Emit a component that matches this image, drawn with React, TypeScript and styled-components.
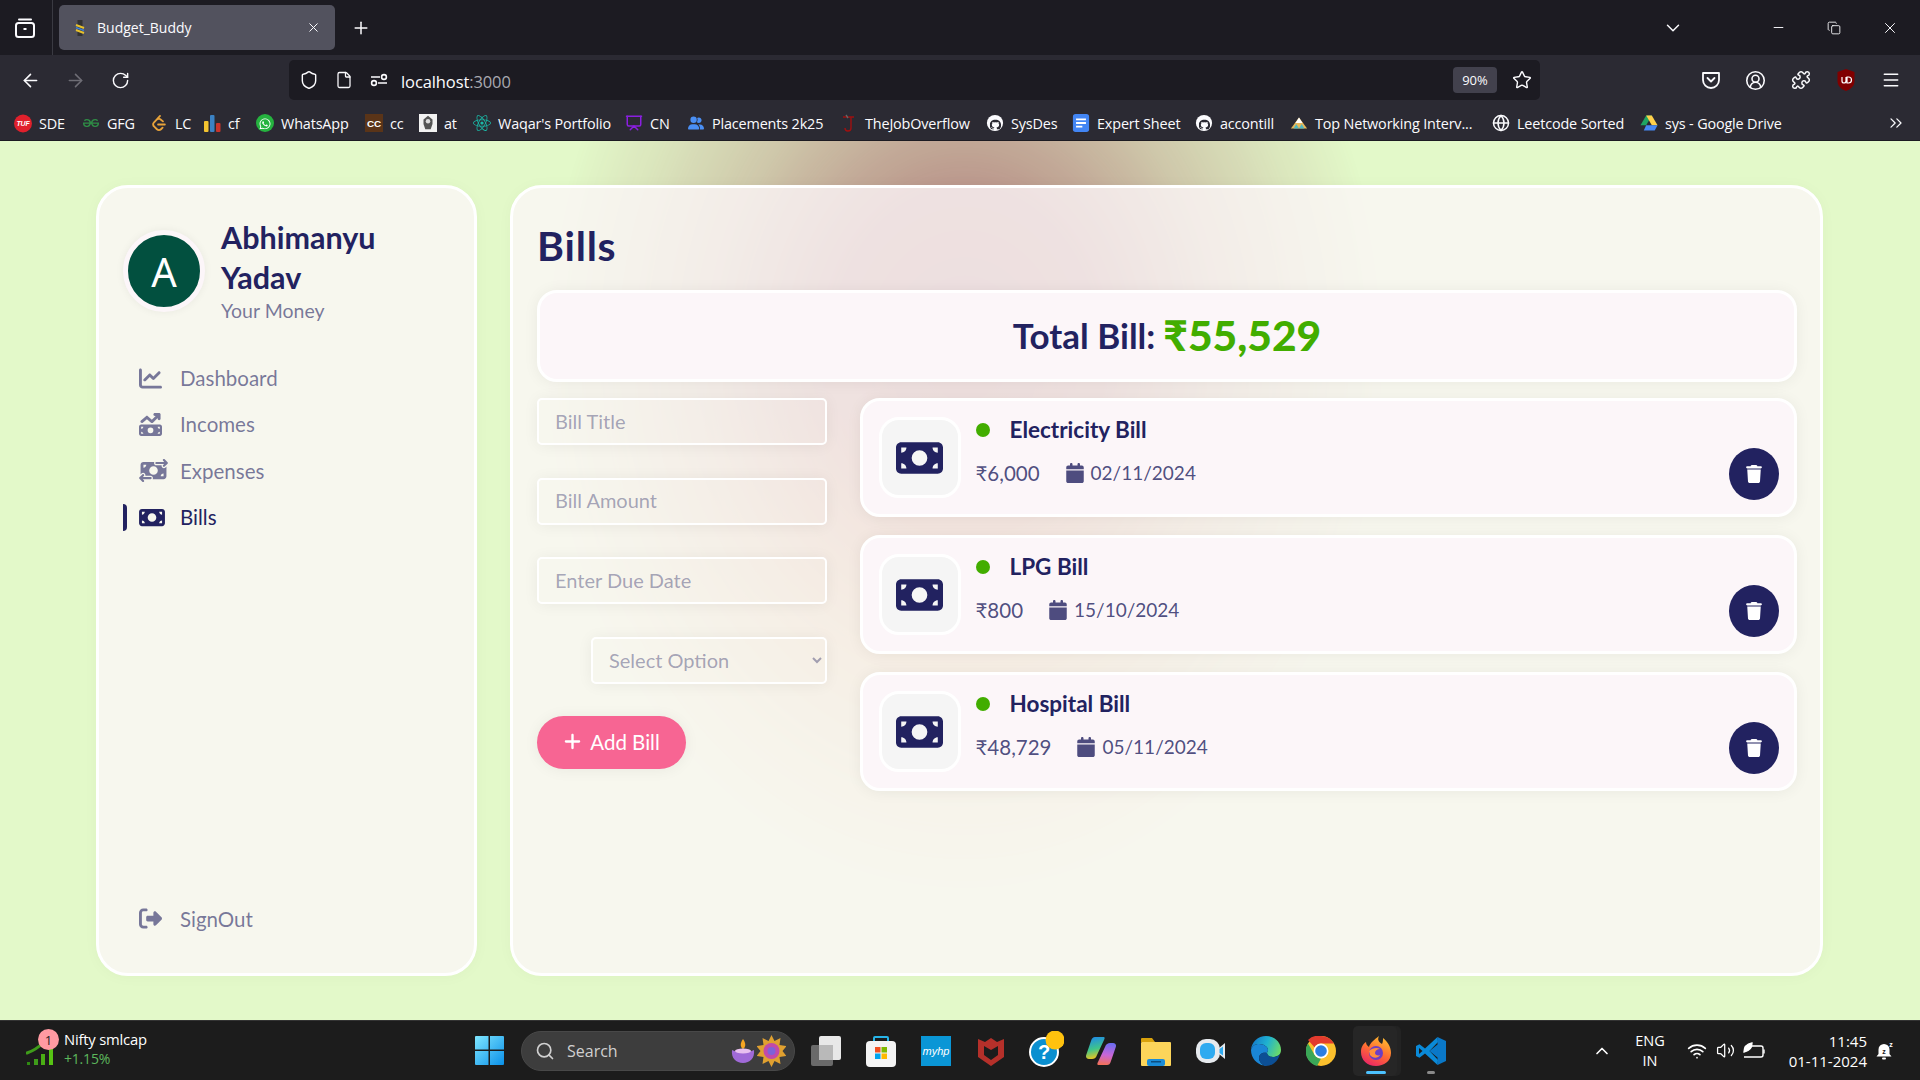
import React from "react";
import styled, { createGlobalStyle } from "styled-components";
import {
  ArrowLeft, ArrowRight, RotateCw, Shield, File, Star, CircleUserRound, Puzzle, Menu, X, Plus,
  ChevronDown, Minus, ChevronsRight, Globe, ChevronUp, Search, Wifi, Volume2, Presentation, Copy,
} from "lucide-react";
import {
  FaMoneyBill, FaMoneyBillTrendUp, FaMoneyBillTransfer, FaChartLine, FaCalendar, FaTrash, FaPlus,
  FaRightFromBracket, FaWhatsapp, FaGithub, FaReact, FaUserGroup,
} from "react-icons/fa6";
import { SiGeeksforgeeks, SiLeetcode } from "react-icons/si";

const Global = createGlobalStyle`
  html, body { margin: 0; padding: 0; width: 1920px; height: 1080px; overflow: hidden; }
  body { font-family: "Open Sans", sans-serif; }
  * { box-sizing: border-box; }
`;

const Screen = styled.div`
  width: 1920px; height: 1080px; display: flex; flex-direction: column; background: #e3f9c9;
`;

/* ---------- browser chrome ---------- */
const TabBar = styled.div`
  height: 55px; background: #1c1b22; display: flex; align-items: center; color: #fbfbfe; flex: none;
`;
const TabListButton = styled.div`
  width: 53px; height: 55px; display: flex; align-items: center; justify-content: center;
  border-right: 1px solid #3a3a42; flex: none; padding-right: 3px;
`;
const Tab = styled.div`
  margin-left: 6px; width: 276px; height: 45px; background: #52525e; border-radius: 5px;
  display: flex; align-items: center; padding: 0 14px 0 14px; font-size: 14px; color: #fbfbfe;
`;
const TabTitle = styled.span` margin-left: 10px; flex: 1; `;
const NewTab = styled.div` width: 52px; display: flex; justify-content: center; `;
const WindowControls = styled.div` margin-left: auto; display: flex; align-items: center; padding-right: 2px; `;
const ListTabs = styled.div` width: 44px; margin-right: 55px; display: flex; justify-content: center; `;
const WinButton = styled.div` width: 56px; display: flex; justify-content: center; `;

const Toolbar = styled.div`
  height: 45px; background: #2b2a33; display: flex; align-items: flex-end; flex: none; padding-left: 8px; color: #fbfbfe;
`;
const ToolButton = styled.div<{ $dim?: boolean }>`
  width: 45px; height: 40px; display: flex; align-items: center; justify-content: center; flex: none;
  color: ${(p) => (p.$dim ? "#6e6d75" : "#fbfbfe")};
`;
const AddressBar = styled.div`
  margin-left: 146px; width: 1251px; height: 40px; background: #1c1b22; border-radius: 5px;
  display: flex; align-items: center; padding-left: 2px; flex: none;
`;
const AddressIcon = styled.div` width: 35px; display: flex; justify-content: center; flex: none; `;
const Url = styled.div` margin-left: 5px; padding-top: 2px; font-size: 16.5px; color: #fbfbfe; flex: 1; letter-spacing: -0.1px; `;
const UrlPort = styled.span` color: #a9a9b0; `;
const ZoomPill = styled.div`
  width: 44px; height: 26px; background: #42414d; border-radius: 4px; font-size: 13px; color: #fbfbfe;
  display: flex; align-items: center; justify-content: center; flex: none;
`;
const StarSlot = styled.div` width: 43px; padding-left: 7px; display: flex; justify-content: center; flex: none; `;
const ToolRight = styled.div` margin-left: 148px; display: flex; `;

const Bookmarks = styled.div`
  height: 41px; background: #2b2a33; display: flex; align-items: center; padding: 6px 0 0 14px; flex: none;
  border-bottom: 1px solid #1c1b22; position: relative;
`;
const Bookmark = styled.div<{ $w: number }>`
  width: ${(p) => p.$w}px; display: flex; align-items: center; font-size: 14.4px; color: #fbfbfe; flex: none;
  white-space: nowrap; gap: 7px; letter-spacing: -0.15px;
`;
const BookmarkIcon = styled.span`
  width: 18px; height: 18px; display: flex; align-items: center; justify-content: center; flex: none;
`;
const MoreBookmarks = styled.div` margin-left: auto; margin-right: 14px; display: flex; color: #fbfbfe; `;

/* ---------- page ---------- */
const Stage = styled.div`
  flex: 1; position: relative; overflow: hidden; background: #e3f9c9; display: flex; gap: 33px;
  padding: 44px 97px 44px 96px; font-family: Lato, "Noto Sans", sans-serif; color: #222260;
`;
const Orb = styled.div`
  position: absolute; left: 525px; top: -341px; width: 880px; height: 1120px;
  background: linear-gradient(180deg, rgb(180,135,130) 49%, rgb(215,160,105) 76%);
  mask-image: radial-gradient(closest-side, rgba(0,0,0,1) 0%, rgba(0,0,0,.85) 31%, rgba(0,0,0,.42) 58%, rgba(0,0,0,.18) 78%, rgba(0,0,0,0) 96%);
`;
const Panel = styled.div`
  position: relative; background: rgba(252, 246, 249, 0.78); border: 3px solid #fff; border-radius: 32px;
  box-shadow: 0 1px 15px rgba(0, 0, 0, 0.03);
`;
const Sidebar = styled(Panel)`
  width: 381px; display: flex; flex-direction: column; padding: 29px 23px 31px 24px;
`;
const Profile = styled.div` display: flex; align-items: center; gap: 16px; `;
const Avatar = styled.div`
  width: 82px; height: 82px; border-radius: 50%; background: #02503f; border: 5px solid #fcf6f9;
  box-shadow: 0 0 8px rgba(0,0,0,.06); color: #fff; font-size: 40px; display: flex; align-items: center;
  justify-content: center; flex: none; font-family: "Noto Sans", sans-serif;
`;
const ProfileText = styled.div` display: flex; flex-direction: column; `;
const ProfileName = styled.div` font-size: 30.5px; line-height: 40px; font-weight: 700; `;
const ProfileSub = styled.div` font-size: 19.5px; line-height: 28px; color: rgba(34,34,96,.6); `;
const Nav = styled.nav` margin-top: 30px; display: flex; flex-direction: column; `;
const NavRow = styled.div<{ $active?: boolean }>`
  position: relative; height: 46.3px; display: flex; align-items: center; padding-left: 16px;
  font-size: 20.5px; color: ${(p) => (p.$active ? "#222260" : "rgba(34,34,96,.6)")};
  &::before {
    content: ""; display: ${(p) => (p.$active ? "block" : "none")}; position: absolute; left: 0; top: 10px;
    width: 4px; height: 27px; background: #222260; border-radius: 0 4px 4px 0;
  }
`;
const NavIcon = styled.span<{ $w: number }>`
  width: 41px; display: flex; align-items: center; flex: none;
  svg { height: 23px; width: ${(p) => p.$w}px; }
`;
const SignOutRow = styled(NavRow)` margin-top: auto; `;

const Main = styled(Panel)` width: 1313px; padding: 33px 23px 0 24px; `;
const Heading = styled.h1` margin: 0; font-size: 41px; line-height: 50px; font-weight: 700; letter-spacing: 0.8px; `;
const TotalCard = styled.div`
  margin-top: 19px; height: 92px; background: #fcf6f9; border: 3px solid #fff; border-radius: 20px; padding-bottom: 3px;
  box-shadow: 0 1px 15px rgba(0,0,0,.06); display: flex; align-items: center; justify-content: center; gap: 8px;
  font-size: 35px; font-weight: 700;
`;
const TotalAmount = styled.span` color: #42ad00; font-size: 42.5px; font-weight: 900; `;
const Columns = styled.div` margin-top: 16px; display: flex; gap: 33px; align-items: flex-start; `;
const Form = styled.form` width: 290px; flex: none; display: flex; flex-direction: column; gap: 32.5px; `;
const Field = styled.input`
  width: 100%; height: 47px; border: 2px solid #fff; border-radius: 5px; background: transparent; outline: none;
  padding: 0 16px 2px; font: 400 20px Lato, sans-serif; color: #222260;
  box-shadow: 0 1px 15px rgba(0,0,0,.06);
  &::placeholder { color: rgba(34,34,96,.4); opacity: 1; }
`;
const Select = styled.select`
  width: 236px; height: 47px; align-self: flex-end; border: 2px solid #fff; border-radius: 5px; background: transparent;
  outline: none; padding: 0 12px; font: 400 20px Lato, sans-serif; color: rgba(34,34,96,.4);
  box-shadow: 0 1px 15px rgba(0,0,0,.06);
`;
const AddButton = styled.button`
  align-self: flex-start; width: 149px; height: 53px; border: 0; border-radius: 30px; background: #f76593; color: #fff;
  display: flex; align-items: center; justify-content: center; gap: 8px; font: 400 20.5px Lato, sans-serif; padding: 0 0 2px;
  box-shadow: 0 1px 15px rgba(0,0,0,.06);
`;
const BillList = styled.div` flex: 1; display: flex; flex-direction: column; gap: 18px; `;
const BillCard = styled.div`
  height: 119px; background: #fcf6f9; border: 3px solid #fff; border-radius: 20px; display: flex; align-items: center;
  padding: 0 15px 0 15.5px; gap: 15px; box-shadow: 0 1px 15px rgba(0,0,0,.06);
`;
const BillIcon = styled.div`
  width: 82px; height: 81px; border-radius: 20px; background: #f5f5f5; border: 3px solid #fff; flex: none;
  display: flex; align-items: center; justify-content: center; color: #222260;
  svg { height: 42px; width: 47px; }
`;
const BillBody = styled.div` flex: 1; display: flex; flex-direction: column; gap: 4px; `;
const BillTitleRow = styled.div` height: 28px; display: flex; align-items: center; gap: 20px; font-size: 22.5px; font-weight: 700; `;
const Dot = styled.span` width: 14px; height: 14px; border-radius: 50%; background: #42ad00; flex: none; `;
const BillMeta = styled.div` height: 52px; display: flex; align-items: center; font-size: 20.5px; color: rgba(34,34,96,.8); `;
const Amount = styled.span` padding-bottom: 2px; `;
const DateText = styled.span` margin-left: 25px; display: flex; align-items: center; gap: 6px; font-size: 19px; padding-bottom: 2px; `;
const DeleteButton = styled.button`
  margin-left: auto; width: 50px; height: 52px; border: 0; border-radius: 50%; background: #222260; color: #fff;
  display: flex; align-items: center; justify-content: center; font-size: 18px; padding: 0;
`;

/* ---------- task bar ---------- */
const TaskBar = styled.div`
  height: 60px; background: #1c1c1c; border-top: 1px solid #333; flex: none; display: flex; align-items: center;
  color: #fff; font-family: "Open Sans", sans-serif; position: relative;
`;
const Widget = styled.div` width: 475px; display: flex; align-items: center; padding-left: 26px; flex: none; position: relative; `;
const WidgetBadge = styled.span`
  position: absolute; left: 38px; top: -3px; width: 21px; height: 21px; border-radius: 50%; background: #ff9aa2; color: #222;
  font-size: 13px; display: flex; align-items: center; justify-content: center;
`;
const WidgetText = styled.div` margin: -3px 0 0 10px; display: flex; flex-direction: column; font-size: 14.8px; line-height: 20px; letter-spacing: -0.2px; `;
const WidgetDelta = styled.span` color: #5cb85c; font-size: 14px; `;
const SearchBox = styled.div`
  margin-left: 17px; width: 274px; height: 40px; border-radius: 20px; background: #3d3d3d; border: 1px solid #484848; display: flex; align-items: center;
  padding: 0 8px 0 13px; color: #d0d0d0; font-size: 16px; flex: none;
`;
const SearchLabel = styled.span` margin-left: 12px; flex: 1; `;
const Apps = styled.div` margin-left: 3px; display: flex; flex: none; `;
const AppSlot = styled.div<{ $active?: boolean }>`
  width: 55px; height: 50px; display: flex; align-items: center; justify-content: center; position: relative;
  &::before {
    content: ""; display: ${(p) => (p.$active ? "block" : "none")}; position: absolute; left: 5px; top: 0; width: 44px; height: 50px;
    background: #262626; border-radius: 5px; box-shadow: 4px 0 0 #232323;
  }
  svg { position: relative; }
`;
const AppMark = styled.span<{ $c: string; $w: number }>`
  position: absolute; bottom: 2px; left: 50%; transform: translateX(-50%); height: 3px; border-radius: 2px;
  width: ${(p) => p.$w}px; background: ${(p) => p.$c};
`;
const Tray = styled.div` margin-left: auto; margin-right: 17px; display: flex; align-items: center; flex: none; `;
const TrayIcon = styled.div<{ $w: number }>` width: ${(p) => p.$w}px; display: flex; justify-content: center; flex: none; `;
const Lang = styled.div` width: 52px; text-align: center; font-size: 14.5px; line-height: 20px; margin: 0 7px; `;
const Clock = styled.div` width: 98px; text-align: right; font-size: 15px; line-height: 20px; `;

/* ---------- drawings ---------- */
const TabListIcon = () => (
  <svg width="22" height="22" viewBox="0 0 22 22" fill="none" stroke="#fbfbfe" strokeWidth="2">
    <rect x="2" y="6" width="18" height="14" rx="2.5" /><path d="M5 2.5h12" strokeLinecap="round" /><rect x="9.5" y="11" width="3" height="2" fill="#fbfbfe" stroke="none" />
  </svg>
);
const Favicon = () => (
  <svg width="14" height="18" viewBox="0 0 14 18"><path d="M7 1v16" stroke="#333" strokeWidth="5" /><path d="M3 6l8 3M3 11l8 3" stroke="#e6c02c" strokeWidth="2" /><path d="M3 8.5l8 3" stroke="#3b7dd8" strokeWidth="1.5" /></svg>
);
const PermsIcon = () => (
  <svg width="18" height="14" viewBox="0 0 18 14" fill="none" stroke="#fbfbfe" strokeWidth="1.6"><path d="M1 4h9M8 10h9" /><circle cx="14" cy="4" r="2.4" /><circle cx="4" cy="10" r="2.4" /></svg>
);
const PocketIcon = () => (
  <svg width="20" height="20" viewBox="0 0 20 20" fill="none" stroke="#fbfbfe" strokeWidth="1.8" strokeLinejoin="round"><path d="M2 3h16v7a8 8 0 0 1-16 0z" /><path d="M6.5 8L10 11.5 13.5 8" strokeLinecap="round" /></svg>
);
const UBlockIcon = () => (
  <svg width="20" height="24" viewBox="0 0 20 24"><path d="M10 1l8.5 3v9c0 5-4 8.5-8.500 10C5.500 21.500 1.500 18 1.500 13V4z" fill="#800000" /><path d="M6 9v4a2 2 0 0 0 4 0V9M11 9v6h1.500a3 3 0 0 0 0-6z" fill="none" stroke="#fff" strokeWidth="1.2" /></svg>
);
const TufIcon = () => (
  <svg width="19" height="19" viewBox="0 0 18 18"><circle cx="9" cy="9" r="9" fill="#e0202c" /><text x="9" y="11.500" textAnchor="middle" fontSize="7" fontWeight="700" fontStyle="italic" fill="#fff" fontFamily="Liberation Sans">TUF</text></svg>
);
const CfIcon = () => (
  <svg width="17" height="18" viewBox="0 0 17 18"><rect x="0" y="7" width="4.500" height="11" rx="1" fill="#f4c430" /><rect x="6" y="1" width="4.500" height="17" rx="1" fill="#3b82c4" /><rect x="12" y="9" width="4.500" height="9" rx="1" fill="#c8342c" /></svg>
);
const WhatsAppIcon = () => (
  <svg width="20" height="20" viewBox="0 0 20 20"><circle cx="10" cy="10" r="10" fill="#25b33f" /><foreignObject x="3" y="3" width="14" height="14"><FaWhatsapp size={14} color="#fff" /></foreignObject></svg>
);
const CcIcon = () => (
  <svg width="20" height="20" viewBox="0 0 20 20"><rect width="20" height="20" fill="#5a3418" /><text x="10" y="14" textAnchor="middle" fontSize="11" fontWeight="700" fill="#fff" fontFamily="Liberation Sans">CC</text></svg>
);
const AtIcon = () => (
  <svg width="20" height="20" viewBox="0 0 20 20"><rect width="20" height="20" fill="#f2f2f2" /><path d="M10 2l5 4v5l-2 6H7l-2-6V6z" fill="#555" /><circle cx="10" cy="8" r="2.500" fill="#ddd" /></svg>
);
const JobIcon = () => (
  <svg width="18" height="18" viewBox="0 0 18 18" fill="none" stroke="#a01010" strokeWidth="1.400"><path d="M3 3h11M11 3v11a3 3 0 0 1-6 0" /><path d="M6 1l2 3" stroke="#666" /></svg>
);
const SheetIcon = () => (
  <svg width="20" height="20" viewBox="0 0 20 20"><rect x="1" width="18" height="20" rx="3" fill="#4285f4" /><path d="M4.500 6h11M4.500 10h11M4.500 14h7" stroke="#fff" strokeWidth="2" /></svg>
);
const RepoIcon = () => (
  <svg width="20" height="20" viewBox="0 0 20 20"><circle cx="10" cy="10" r="9" fill="#fbfbfe" /><foreignObject x="3.500" y="3.500" width="13" height="13"><FaGithub size={13} color="#2b2a33" /></foreignObject></svg>
);
const PeakIcon = () => (
  <svg width="20" height="16" viewBox="0 0 20 16"><path d="M10 2l9 12H1z" fill="#e6b85c" /><path d="M10 2l4 6H6z" fill="#fff" /><path d="M4 14l3-5 3 5 3-5 3 5z" fill="#4fb8c4" /></svg>
);
const DriveIcon = () => (
  <svg width="19" height="18" viewBox="0 0 19 18"><path d="M6.500 1h6l-6 10.500H.500z" fill="#1fa463" /><path d="M12.500 1l6 10.500h-6L6.500 1z" fill="#ffd04b" /><path d="M4 17l2.500-5.500h12L15.500 17z" fill="#4688f4" /></svg>
);
const ChartSmall = () => (
  <svg width="28" height="30" viewBox="0 0 28 30"><path d="M1 17Q10 14 18 6" fill="none" stroke="#3f9c1a" strokeWidth="3" strokeLinecap="round" /><rect x="1" y="26" width="3" height="3" fill="#2f8a12" /><rect x="8" y="23" width="4" height="6" fill="#3f9c1a" /><rect x="15" y="18" width="4" height="11" fill="#4aae14" /><rect x="23" y="12" width="4" height="17" fill="#57c414" /></svg>
);
const StartIcon = () => (
  <svg width="29" height="29" viewBox="0 0 29 29"><defs><linearGradient id="st" x1="0" y1="0" x2="1" y2="1"><stop offset="0" stopColor="#7fe6ff" /><stop offset="1" stopColor="#0a90e8" /></linearGradient></defs><path d="M0 1a1 1 0 0 1 1-1h12.500v13.500H0zM15 0h13a1 1 0 0 1 1 1v12.500H15zM0 15h13.500v14H1a1 1 0 0 1-1-1zM15 15h14v13a1 1 0 0 1-1 1H15z" fill="url(#st)" /></svg>
);
const DiyaIcon = () => (
  <svg width="26" height="28" viewBox="0 0 26 28"><path d="M12 2c3 4 3 8 0 10-3-2-3-6 0-10z" fill="#f6a623" /><path d="M1 13c6 3 16 3 22 0 1 8-4 13-11 13S0 21 1 13z" fill="#a06ad8" /><ellipse cx="12" cy="14" rx="8" ry="2.500" fill="#e8c0f0" /></svg>
);
const StarburstIcon = () => (
  <svg width="29" height="32" viewBox="0 0 29 32"><path d="M14.500 0l3 6 6-3-1 7 7 1-4 5 4 5-7 1 1 7-6-3-3 6-3-6-6 3 1-7-7-1 4-5-4-5 7-1-1-7 6 3z" fill="#e0a030" /><circle cx="14.500" cy="16" r="8" fill="#c24aa8" /><circle cx="14.500" cy="16" r="4" fill="#7d62d8" /></svg>
);
const TaskViewIcon = () => (
  <svg width="30" height="30" viewBox="0 0 30 30"><rect x="8" y="0" width="22" height="24" rx="2" fill="#e8e8e8" /><rect x="0" y="9" width="22" height="21" rx="2" fill="#6a6a6a" /><rect x="8" y="9" width="14" height="15" fill="#b9b9b9" /></svg>
);
const StoreIcon = () => (
  <svg width="30" height="32" viewBox="0 0 30 32"><path d="M8 7V3a1 1 0 0 1 1-1h12a1 1 0 0 1 1 1v4" fill="none" stroke="#27b4e8" strokeWidth="2" /><rect y="6" width="30" height="26" rx="4" fill="#f4f4f4" /><rect x="9" y="12" width="5.500" height="5.500" fill="#f25022" /><rect x="15.500" y="12" width="5.500" height="5.500" fill="#7fba00" /><rect x="9" y="18.500" width="5.500" height="5.500" fill="#00a4ef" /><rect x="15.500" y="18.500" width="5.500" height="5.500" fill="#ffb900" /></svg>
);
const MyHpIcon = () => (
  <svg width="30" height="30" viewBox="0 0 30 30"><rect width="30" height="30" fill="#0a96d6" /><text x="15" y="19" textAnchor="middle" fontSize="11" fontStyle="italic" fill="#fff" fontFamily="Liberation Sans">myhp</text></svg>
);
const McAfeeIcon = () => (
  <svg width="26" height="30" viewBox="0 0 26 30"><path d="M0 3l7 3 6-4 6 4 7-3v18l-13 9-13-9z" fill="#b5302a" /><path d="M6 10l7 4 7-4v9l-7 5-7-5z" fill="#1c1c1c" /></svg>
);
const HelpIcon = () => (
  <svg width="36" height="40" viewBox="0 0 36 40"><circle cx="16" cy="21" r="14" fill="#0a8fd0" stroke="#fff" strokeWidth="2" /><text x="16" y="28" textAnchor="middle" fontSize="20" fontWeight="700" fill="#fff" fontFamily="Liberation Sans">?</text><circle cx="27" cy="9" r="9.500" fill="#ffc20e" /></svg>
);
const CopilotIcon = () => (
  <svg width="30" height="30" viewBox="0 0 30 30"><defs><linearGradient id="co1" x1=".3" y1="0" x2=".5" y2="1"><stop offset="0" stopColor="#1f8be8" /><stop offset=".55" stopColor="#3fc58a" /><stop offset="1" stopColor="#f5c518" /></linearGradient><linearGradient id="co2" x1=".6" y1="0" x2=".5" y2="1"><stop offset="0" stopColor="#6a6cf0" /><stop offset=".55" stopColor="#c866d8" /><stop offset="1" stopColor="#f2705a" /></linearGradient></defs><path d="M9 1h8c2 0 2 1 1 3l-7 15c-1 3-3 4-5 4H3c-2.500 0-3.500-2-2.800-4L5 5c1-3 2-4 4-4z" fill="url(#co1)" /><path d="M21 29h-8c-2 0-2-1-1-3l7-15c1-3 3-4 5-4h3c2.500 0 3.500 2 2.800 4L25 25c-1 3-2 4-4 4z" fill="url(#co2)" /></svg>
);
const FolderIcon = () => (
  <svg width="30" height="30" viewBox="0 0 30 30"><path d="M0 3a1 1 0 0 1 1-1h10l3 4H0z" fill="#d9a20c" /><rect y="6" width="30" height="24" rx="1" fill="#fcd55a" /><rect x="6" y="23" width="18" height="7" rx="2" fill="#1a8cd8" /><rect x="10" y="25" width="10" height="1.500" fill="#0b4d80" /></svg>
);
const MeetIcon = () => (
  <svg width="30" height="30" viewBox="0 0 30 30"><rect x="0" y="3" width="24" height="24" rx="10" fill="#e6eaee" /><rect x="4" y="7" width="15" height="16" rx="6" fill="#2eaaf0" /><path d="M23 12l6-5v16l-6-5z" fill="#e6eaee" /><path d="M23.500 13l3.500-2.500v9L23.500 17z" fill="#2eaaf0" /></svg>
);
const EdgeIcon = () => (
  <svg width="30" height="30" viewBox="0 0 30 30"><defs><linearGradient id="ed1" x1="0" y1=".3" x2="1" y2=".6"><stop offset="0" stopColor="#1478cc" /><stop offset=".5" stopColor="#1fb2d0" /><stop offset="1" stopColor="#6ada6a" /></linearGradient></defs><path d="M15 0C23 0 30 6 30 14c0 5-4 7-8 7-4 0-6-2-6-4 0-1 1-2 1-3 0-3-4-6-9-6-4 0-7 2-8 6 .5-8 7-14 15-14z" fill="url(#ed1)" /><path d="M0 14c1-4 4-6 8-6 5 0 9 3 9 6 0 1-1 2-1 3-4-1-8 1-8 5 0 3 2 6 5 7.500C6 28.500 0 22 0 14z" fill="#1a86d6" /><path d="M8 22c0-4 4-6 8-5 0 2 2 4 6 4 3 0 5-1 7-3-2 7-7 12-14 12-2 0-2 0-2-.5-3-1.500-5-4.500-5-7.500z" fill="#0c4f95" /></svg>
);
const ChromeIcon = () => (
  <svg width="30" height="30" viewBox="0 0 30 30"><circle cx="15" cy="15" r="15" fill="#fbc02d" /><path d="M15 0a15 15 0 0 1 13 7.500H15A7.500 7.500 0 0 0 8.500 11.300L2 3.900A15 15 0 0 1 15 0z" fill="#e33b2e" /><path d="M2 7.500l6.500 11.300A7.500 7.500 0 0 0 15 22.500L11 30A15 15 0 0 1 2 7.500z" fill="#3aa757" /><circle cx="15" cy="15" r="7.500" fill="#fff" /><circle cx="15" cy="15" r="5.800" fill="#2a7de1" /></svg>
);
const FirefoxIcon = () => (
  <svg width="30" height="32" viewBox="0 0 30 32"><defs><linearGradient id="ff" x1=".7" y1="0" x2=".2" y2="1"><stop offset="0" stopColor="#ffbd2e" /><stop offset=".5" stopColor="#ff6a33" /><stop offset="1" stopColor="#e8206a" /></linearGradient></defs><path d="M15 31C6 31 0 25 0 17 0 12 2 9 5 7c0 3 2 4 3 5 1-4 5-7 10-11-2 4 0 6 3 8 1-2 1-4 1-6 5 4 8 9 8 15 0 8-7 13-15 13z" fill="url(#ff)" /><circle cx="15" cy="18" r="7" fill="#6b3fc4" /><path d="M8 16c3-3 8-4 11-2-3 0-5 2-5 4s3 3 5 2c-2 4-8 3-10 0z" fill="#ff8f3a" /></svg>
);
const VsCodeIcon = () => (
  <svg width="30" height="30" viewBox="0 0 30 30"><path d="M9 12.500L3.500 8.200 0 10v10l3.500 1.800L9 17.500 21.500 29 22 24 13.500 15 22 6l-.5-5z" fill="#0a8ad8" /><path d="M21.500 1L30 5v20l-8.500 4z M21.500 8.500L13.500 15l8 6.500z" fill="#0a78c8" fillRule="evenodd" /><path d="M3 12l3.500 3-3.500 3z" fill="#1c1c1c" /></svg>
);
const BatteryLeaf = () => (
  <svg width="22" height="20" viewBox="0 0 22 20" fill="none" stroke="#fff" strokeWidth="1.400"><path d="M8 5h10a2 2 0 0 1 2 2v7a2 2 0 0 1-2 2H1" /><path d="M21 8.500v4" /><path d="M1 11C1 6 4 3 9 2c0 5-3 8-8 9z" fill="#fff" /></svg>
);
const BellZ = () => (
  <svg width="18" height="20" viewBox="0 0 18 20"><path d="M8 3a5.500 5.500 0 0 1 5.500 5.500V13l2 2.500H.5L2.500 13V8.500A5.500 5.500 0 0 1 8 3z" fill="#fff" /><rect x="6" y="16.500" width="4" height="2" rx="1" fill="#fff" /><text x="8" y="12.500" textAnchor="middle" fontSize="7" fontWeight="700" fill="#1c1c1c" fontFamily="Liberation Sans">z</text><text x="15" y="6" textAnchor="middle" fontSize="7" fontWeight="700" fill="#fff" fontFamily="Liberation Sans">z</text></svg>
);

const bookmarks: { label: string; w: number; icon: React.ReactNode }[] = [
  { label: "SDE", w: 68, icon: <TufIcon /> },
  { label: "GFG", w: 68, icon: <SiGeeksforgeeks size={16} color="#2f8d46" /> },
  { label: "LC", w: 53, icon: <SiLeetcode size={16} color="#e8a33a" /> },
  { label: "cf", w: 53, icon: <CfIcon /> },
  { label: "WhatsApp", w: 109, icon: <WhatsAppIcon /> },
  { label: "cc", w: 54, icon: <CcIcon /> },
  { label: "at", w: 54, icon: <AtIcon /> },
  { label: "Waqar's Portfolio", w: 152, icon: <FaReact size={18} color="#1bb8a6" /> },
  { label: "CN", w: 62, icon: <Presentation size={18} color="#8a1fe0" /> },
  { label: "Placements 2k25", w: 153, icon: <FaUserGroup size={16} color="#4a8ff5" /> },
  { label: "TheJobOverflow", w: 146, icon: <JobIcon /> },
  { label: "SysDes", w: 86, icon: <RepoIcon /> },
  { label: "Expert Sheet", w: 123, icon: <SheetIcon /> },
  { label: "accontill", w: 95, icon: <RepoIcon /> },
  { label: "Top Networking Interv...", w: 202, icon: <PeakIcon /> },
  { label: "Leetcode Sorted", w: 148, icon: <Globe size={18} color="#fbfbfe" /> },
  { label: "sys - Google Drive", w: 160, icon: <DriveIcon /> },
];

const bills = [
  { title: "Electricity Bill", amount: "₹6,000", date: "02/11/2024" },
  { title: "LPG Bill", amount: "₹800", date: "15/10/2024" },
  { title: "Hospital Bill", amount: "₹48,729", date: "05/11/2024" },
];

const nav = [
  { label: "Dashboard", w: 23, icon: <FaChartLine /> },
  { label: "Incomes", w: 23, icon: <FaMoneyBillTrendUp /> },
  { label: "Expenses", w: 29, icon: <FaMoneyBillTransfer /> },
  { label: "Bills", w: 26, icon: <FaMoneyBill />, active: true },
];

const apps: { icon: React.ReactNode; active?: boolean; mark?: [string, number] }[] = [
  { icon: <TaskViewIcon /> }, { icon: <StoreIcon /> }, { icon: <MyHpIcon /> }, { icon: <McAfeeIcon /> },
  { icon: <HelpIcon /> }, { icon: <CopilotIcon /> }, { icon: <FolderIcon /> }, { icon: <MeetIcon /> },
  { icon: <EdgeIcon /> }, { icon: <ChromeIcon /> },
  { icon: <FirefoxIcon />, active: true, mark: ["#4cc2ff", 20] },
  { icon: <VsCodeIcon />, mark: ["#8a8a8a", 8] },
];

export default function App() {
  return (
    <Screen>
      <Global />
      <TabBar>
        <TabListButton><TabListIcon /></TabListButton>
        <Tab>
          <Favicon />
          <TabTitle>Budget_Buddy</TabTitle>
          <X size={15} strokeWidth={1.6} />
        </Tab>
        <NewTab><Plus size={20} strokeWidth={1.8} /></NewTab>
        <WindowControls>
          <ListTabs><ChevronDown size={22} strokeWidth={1.6} /></ListTabs>
          <WinButton><Minus size={15} strokeWidth={1.5} /></WinButton>
          <WinButton><Copy size={14} strokeWidth={1.5} /></WinButton>
          <WinButton><X size={18} strokeWidth={1.3} /></WinButton>
        </WindowControls>
      </TabBar>
      <Toolbar>
        <ToolButton><ArrowLeft size={21} strokeWidth={1.8} /></ToolButton>
        <ToolButton $dim><ArrowRight size={21} strokeWidth={1.8} /></ToolButton>
        <ToolButton><RotateCw size={19} strokeWidth={1.8} /></ToolButton>
        <AddressBar>
          <AddressIcon><Shield size={20} strokeWidth={1.7} /></AddressIcon>
          <AddressIcon><File size={18} strokeWidth={1.7} /></AddressIcon>
          <AddressIcon><PermsIcon /></AddressIcon>
          <Url>localhost<UrlPort>:3000</UrlPort></Url>
          <ZoomPill>90%</ZoomPill>
          <StarSlot><Star size={20} strokeWidth={1.7} /></StarSlot>
        </AddressBar>
        <ToolRight>
          <ToolButton><PocketIcon /></ToolButton>
          <ToolButton><CircleUserRound size={21} strokeWidth={1.8} /></ToolButton>
          <ToolButton><Puzzle size={20} strokeWidth={1.8} /></ToolButton>
          <ToolButton><UBlockIcon /></ToolButton>
          <ToolButton><Menu size={20} strokeWidth={1.8} /></ToolButton>
        </ToolRight>
      </Toolbar>
      <Bookmarks>
        {bookmarks.map((b) => (
          <Bookmark key={b.label} $w={b.w}>
            <BookmarkIcon>{b.icon}</BookmarkIcon>
            {b.label}
          </Bookmark>
        ))}
        <MoreBookmarks><ChevronsRight size={20} strokeWidth={1.5} /></MoreBookmarks>
      </Bookmarks>

      <Stage>
        <Orb />
        <Sidebar>
          <Profile>
            <Avatar>A</Avatar>
            <ProfileText>
              <ProfileName>Abhimanyu<br />Yadav</ProfileName>
              <ProfileSub>Your Money</ProfileSub>
            </ProfileText>
          </Profile>
          <Nav>
            {nav.map((n) => (
              <NavRow key={n.label} $active={n.active}>
                <NavIcon $w={n.w}>{n.icon}</NavIcon>
                {n.label}
              </NavRow>
            ))}
          </Nav>
          <SignOutRow>
            <NavIcon $w={23}><FaRightFromBracket /></NavIcon>
            SignOut
          </SignOutRow>
        </Sidebar>
        <Main>
          <Heading>Bills</Heading>
          <TotalCard>
            Total Bill: <TotalAmount>₹55,529</TotalAmount>
          </TotalCard>
          <Columns>
            <Form>
              <Field placeholder="Bill Title" />
              <Field placeholder="Bill Amount" />
              <Field placeholder="Enter Due Date" />
              <Select defaultValue="">
                <option value="" disabled>Select Option</option>
              </Select>
              <AddButton type="button"><FaPlus size={19} />Add Bill</AddButton>
            </Form>
            <BillList>
              {bills.map((b) => (
                <BillCard key={b.title}>
                  <BillIcon><FaMoneyBill /></BillIcon>
                  <BillBody>
                    <BillTitleRow><Dot />{b.title}</BillTitleRow>
                    <BillMeta>
                      <Amount>{b.amount}</Amount>
                      <DateText><FaCalendar size={20} />{b.date}</DateText>
                      <DeleteButton type="button"><FaTrash /></DeleteButton>
                    </BillMeta>
                  </BillBody>
                </BillCard>
              ))}
            </BillList>
          </Columns>
        </Main>
      </Stage>

      <TaskBar>
        <Widget>
          <ChartSmall />
          <WidgetBadge>1</WidgetBadge>
          <WidgetText>
            Nifty smlcap
            <WidgetDelta>+1.15%</WidgetDelta>
          </WidgetText>
        </Widget>
        <StartIcon />
        <SearchBox>
          <Search size={20} strokeWidth={2} />
          <SearchLabel>Search</SearchLabel>
          <DiyaIcon />
          <StarburstIcon />
        </SearchBox>
        <Apps>
          {apps.map((a, i) => (
            <AppSlot key={i} $active={a.active}>
              {a.icon}
              {a.mark && <AppMark $c={a.mark[0]} $w={a.mark[1]} />}
            </AppSlot>
          ))}
        </Apps>
        <Tray>
          <TrayIcon $w={30}><ChevronUp size={20} strokeWidth={2} /></TrayIcon>
          <Lang>ENG<br />IN</Lang>
          <TrayIcon $w={28}><Wifi size={20} strokeWidth={2} /></TrayIcon>
          <TrayIcon $w={28}><Volume2 size={19} strokeWidth={1.6} /></TrayIcon>
          <TrayIcon $w={30}><BatteryLeaf /></TrayIcon>
          <Clock>11:45<br />01-11-2024</Clock>
          <TrayIcon $w={36}><BellZ /></TrayIcon>
        </Tray>
      </TaskBar>
    </Screen>
  );
}
